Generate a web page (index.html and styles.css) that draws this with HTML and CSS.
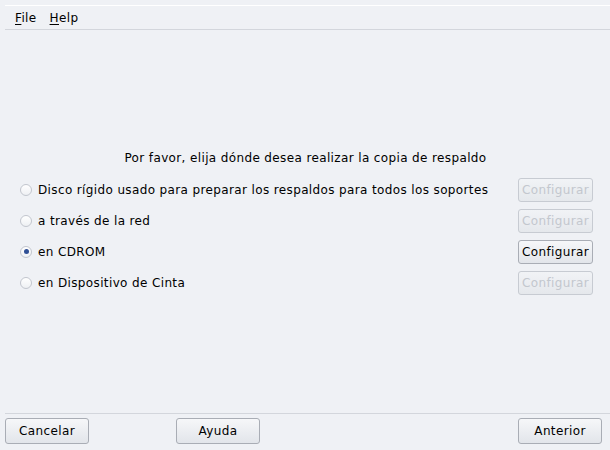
FILE: index.html
```html
<!DOCTYPE html>
<html>
<head>
<meta charset="utf-8">
<link rel="stylesheet" href="styles.css">
</head>
<body>
<div class="window">
  <div class="menubar">
    <span class="menu"><u>F</u>ile</span>
    <span class="menu"><u>H</u>elp</span>
  </div>
  <div class="content">
    <div class="title">Por favor, elija dónde desea realizar la copia de respaldo</div>
    <div class="options">
      <div class="row">
        <span class="radio"></span>
        <span class="label">Disco rígido usado para preparar los respaldos para todos los soportes</span>
        <button class="btn cfg" disabled>Configurar</button>
      </div>
      <div class="row">
        <span class="radio"></span>
        <span class="label">a través de la red</span>
        <button class="btn cfg" disabled>Configurar</button>
      </div>
      <div class="row">
        <span class="radio on"></span>
        <span class="label">en CDROM</span>
        <button class="btn cfg">Configurar</button>
      </div>
      <div class="row">
        <span class="radio"></span>
        <span class="label">en Dispositivo de Cinta</span>
        <button class="btn cfg" disabled>Configurar</button>
      </div>
    </div>
  </div>
  <div class="footer">
    <button class="btn big">Cancelar</button>
    <button class="btn big help">Ayuda</button>
    <span class="spacer"></span>
    <button class="btn big">Anterior</button>
  </div>
</div>
</body>
</html>
```
FILE: styles.css
```css
html, body {
  margin: 0;
  padding: 0;
  background: #eff1f5;
}
body {
  font-family: "DejaVu Sans", sans-serif;
  font-size: 12px;
  letter-spacing: 0.37px;
  color: #000;
}
.window {
  width: 610px;
  height: 450px;
  display: flex;
  flex-direction: column;
  box-sizing: border-box;
}
.menubar {
  margin: 5px 0 0 5px;
  border-top: 1px solid #ffffff;
  border-bottom: 1px solid #d3d6dc;
  height: 23px;
  display: flex;
  align-items: center;
  gap: 13px;
  padding-left: 10px;
}
.menu u {
  text-decoration-thickness: 1px;
  text-underline-offset: 2px;
}
.content {
  flex: 1;
  display: flex;
  flex-direction: column;
  padding-top: 118px;
}
.title {
  text-align: center;
  height: 20px;
  line-height: 20px;
  margin-bottom: 9px;
  padding-left: 1px;
}
.options {
  display: flex;
  flex-direction: column;
  gap: 6px;
  padding: 0 17px 0 20px;
}
.row {
  display: flex;
  align-items: center;
  height: 25px;
}
.radio {
  width: 12px;
  height: 12px;
  border-radius: 50%;
  border: 1px solid #c2c6ce;
  background: linear-gradient(#ffffff, #eef0f3);
  box-sizing: border-box;
  position: relative;
  margin-right: 6px;
  flex: none;
}
.radio.on::after {
  content: "";
  position: absolute;
  left: 2.5px;
  top: 2.5px;
  width: 5px;
  height: 5px;
  border-radius: 50%;
  background: #2f4f95;
}
.label {
  flex: 1;
  white-space: nowrap;
}
.btn {
  font-family: "DejaVu Sans", sans-serif;
  font-size: 12px;
  letter-spacing: 0.37px;
  color: #000;
  border: 1px solid #a9adb5;
  border-radius: 3px;
  background: linear-gradient(#f6f7f9, #e2e5ea);
  padding: 0;
  box-sizing: border-box;
}
.btn:disabled {
  color: #c3c7ce;
  border-color: #c7cbd2;
  background: linear-gradient(#f1f3f6, #e5e8ec);
}
.cfg {
  width: 75px;
  height: 24px;
}
.footer {
  margin: 0 0 0 5px;
  border-top: 1px solid #d3d6dc;
  padding: 4px 8px 6px 0;
  display: flex;
  align-items: center;
}
.big {
  width: 84px;
  height: 26px;
}
.help {
  margin-left: 87px;
}
.spacer {
  flex: 1;
}
```
